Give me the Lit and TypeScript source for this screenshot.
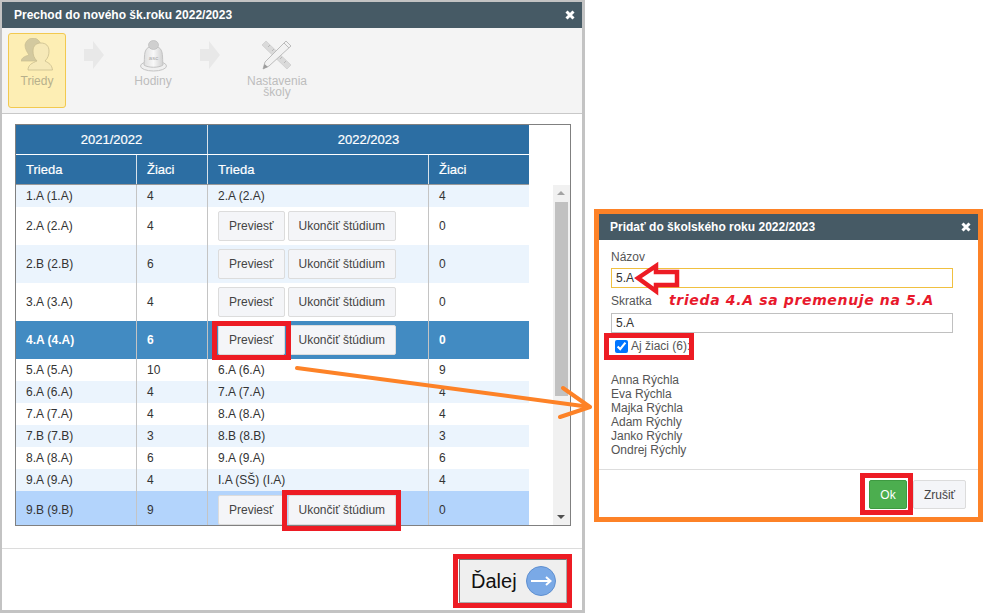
import { LitElement, html, css, svg } from "lit";
import { customElement } from "lit/decorators.js";

type Row = { a: string; n: string; b?: string; m: string; kind?: string };
const rows: Row[] = [
  { a: "1.A (1.A)", n: "4", b: "2.A (2.A)", m: "4", kind: "alt" },
  { a: "2.A (2.A)", n: "4", m: "0" },
  { a: "2.B (2.B)", n: "6", m: "0", kind: "alt" },
  { a: "3.A (3.A)", n: "4", m: "0" },
  { a: "4.A (4.A)", n: "6", m: "0", kind: "sel" },
  { a: "5.A (5.A)", n: "10", b: "6.A (6.A)", m: "9" },
  { a: "6.A (6.A)", n: "4", b: "7.A (7.A)", m: "4", kind: "alt" },
  { a: "7.A (7.A)", n: "4", b: "8.A (8.A)", m: "4" },
  { a: "7.B (7.B)", n: "3", b: "8.B (8.B)", m: "3", kind: "alt" },
  { a: "8.A (8.A)", n: "6", b: "9.A (9.A)", m: "6" },
  { a: "9.A (9.A)", n: "4", b: "I.A (SŠ) (I.A)", m: "4", kind: "alt" },
  { a: "9.B (9.B)", n: "9", m: "0", kind: "hl" },
];
const names = ["Anna Rýchla", "Eva Rýchla", "Majka Rýchla", "Adam Rýchly", "Janko Rýchly", "Ondrej Rýchly"];

const closeIcon = html`<svg class="close" width="10" height="10" viewBox="0 0 10 10"><path d="M1.500 1.500L8.500 8.500M8.500 1.500L1.500 8.500" stroke="#fff" stroke-width="3" fill="none"/></svg>`;
const stepArrow = html`<svg width="20" height="28" viewBox="0 0 20 28"><path d="M0 8H9V0L20 14L9 28V20H0Z" fill="#e8e8e8"/></svg>`;

const people = svg`<svg width="32" height="33" viewBox="0 0 32 33">
  <path d="M0 23C1 19 5 18 8 17C6 14 4 11 4 7C5 2 9 0 12 0C16 0 19 3 20 7L19 23Z" fill="#d3c99f" stroke="#c8bd90" stroke-width=".7"/>
  <path d="M7 32C7 27 11 25 16 23C13 20 12 17 12 13C12 7 16 5 20 5C25 5 28 8 28 13C28 17 27 20 24 23C28 25 31 27 31.500 32Z" fill="#f6e9b8" stroke="#c9bd8e" stroke-width=".8"/>
</svg>`;
const bell = svg`<svg width="27" height="32" viewBox="0 0 27 32">
  <defs><linearGradient id="bg" x1="0" x2="1" y1="0" y2="0"><stop offset="0" stop-color="#dedede"/><stop offset=".5" stop-color="#f8f8f8"/><stop offset="1" stop-color="#d0d0d0"/></linearGradient></defs>
  <ellipse cx="13.500" cy="26" rx="13" ry="5" fill="#f0f0f0" stroke="#c4c4c4"/>
  <path d="M4 25C5 18 3 10 9 7H18C24 10 22 18 23 25C19 28 8 28 4 25Z" fill="url(#bg)" stroke="#c4c4c4"/>
  <ellipse cx="13.500" cy="5" rx="5" ry="4.500" fill="#cfcfcf" stroke="#bdbdbd" stroke-width=".7"/>
  <text x="13.500" y="20" font-size="6" text-anchor="middle" fill="#aaa" font-family="Liberation Sans">asc</text>
</svg>`;
const tools = svg`<svg width="30" height="30" viewBox="0 0 30 30">
  <path d="M4 1L0 5L25 29L29 25Z" fill="#dadada" stroke="#cbcbcb" stroke-width=".7"/>
  <path d="M6 7l2-2M10 11l2-2M14 15l2-2M18 19l2-2M22 23l2-2" stroke="#b9b9b9" fill="none"/>
  <path d="M24 1L29 6L7 26L1 29L3 22Z" fill="#f2f2f2" stroke="#bcbcbc"/>
  <path d="M1 29L2.500 24L6 27Z" fill="#9c9c9c"/>
  <path d="M22 3L27 8" stroke="#bcbcbc"/>
</svg>`;

@customElement("app-root")
export class AppRoot extends LitElement {
  static styles = css`
    :host {
      display: block;
      position: relative;
      width: 998px;
      height: 613px;
      overflow: hidden;
      background: #fff;
      font-family: "Liberation Sans", Arial, sans-serif;
      font-size: 12px;
      color: #333;
    }
    .window {
      position: absolute;
      left: 0;
      top: 0;
      width: 580px;
      height: 608px;
      border: solid #c3c3c3;
      border-width: 2px 3px 3px 2px;
      background: #fff;
      display: flex;
      flex-direction: column;
    }
    .title {
      height: 26px;
      flex: none;
      background: #465a65;
      color: #fff;
      font-weight: bold;
      display: flex;
      align-items: center;
      justify-content: space-between;
      padding: 0 7px 0 12px;
    }
    .dialog .title { padding: 0 7px 0 11px; }
    .close { display: block; }
    .toolbar {
      height: 86px;
      flex: none;
      box-sizing: border-box;
      background: #f4f4f4;
      border-bottom: 1px solid #c8c8c8;
      display: flex;
      align-items: flex-start;
      padding: 5px 0 0 6px;
      color: #bdbdbd;
    }
    .step {
      width: 58px;
      height: 75px;
      box-sizing: border-box;
      display: flex;
      flex-direction: column;
      align-items: center;
      text-align: center;
      line-height: 11px;
      border: 1px solid transparent;
      border-radius: 3px;
    }
    .step.active {
      background: #fdeeb4;
      border-color: #f2c94f;
      color: #b7b08c;
    }
    .icon { height: 41px; padding-top: 6px; display: flex; align-items: flex-start; }
    .step .label { margin-top: -5px; }
    .step.s1 .icon { padding-top: 4px; height: 43px; }
    .step.s2 { margin-left: 3px; }
    .step.s3 { margin-left: 11px; }
    .arrow { width: 55px; display: flex; justify-content: center; padding-top: 8px; }
    .body { flex: 1; padding: 10px 11px 0 13px; min-height: 0; }
    .frame {
      width: 554px;
      height: 400px;
      border: 1px solid #808080;
      position: relative;
      overflow: hidden;
      display: flex;
    }
    .tbl { width: 513px; flex: none; }
    .head1, .head2, .row {
      display: grid;
      grid-template-columns: 121px 71px 221px 100px;
    }
    .head1 { grid-template-columns: 192px 321px; height: 30px; background: #2c6ea3; border-bottom: 1px solid #fff; box-sizing: border-box; }
    .head2 { height: 30px; background: #2c6ea3; border-bottom: 1px solid #999; box-sizing: border-box; }
    .head1 > div, .head2 > div {
      color: #fff;
      font-size: 13px;
      display: flex;
      align-items: center;
      border-right: 1px solid #d8e2ea;
      -webkit-text-stroke: 0.2px #fff;
    }
    .head1 > div { justify-content: center; }
    .head2 > div { padding-left: 10px; }
    .head1 > div:last-child, .head2 > div:last-child { border-right: 0; }
    .row { background: #fff; }
    .row.alt { background: #ebf4fd; }
    .row.sel { background: #428bc2; }
    .row.sel .c { color: #fff; font-weight: bold; }
    .row.sel .c.actions { font-weight: normal; }
    .row.hl { background: #b3d4fc; }
    .c {
      min-height: 22px;
      padding: 0 0 0 10px;
      display: flex;
      align-items: center;
      border-right: 1px solid #c4c4c4;
    }
    .c:last-child { border-right: 0; }
    .c.actions { gap: 3px; padding: 4px 0 4px 10px; }
    .btn {
      height: 30px;
      box-sizing: border-box;
      padding: 0 10px;
      border: 1px solid #dcdcdc;
      border-radius: 2px;
      background: #f4f5f8;
      color: #444;
      font: 12px "Liberation Sans", Arial, sans-serif;
    }
    .sb {
      position: absolute;
      right: 0;
      top: 60px;
      bottom: 0;
      width: 17px;
      background: #f1f1f1;
    }
    .thumb { position: absolute; left: 2px; top: 17px; width: 13px; height: 194px; background: #c1c1c1; }
    .tri { position: absolute; left: 4px; width: 0; height: 0; border-left: 4px solid transparent; border-right: 4px solid transparent; }
    .tri.up { top: 6px; border-bottom: 4px solid #a3a3a3; }
    .tri.down { bottom: 6px; border-top: 4px solid #505050; }
    .footer {
      height: 62px;
      flex: none;
      box-sizing: border-box;
      border-top: 1px solid #dcdcdc;
      display: flex;
      justify-content: flex-end;
      padding: 10px 15px 0 0;
    }
    .next {
      width: 108px;
      height: 44px;
      box-sizing: border-box;
      background: #efefef;
      border: 1px solid #767676;
      border-right-color: #aaa;
      border-bottom-color: #aaa;
      display: flex;
      align-items: center;
      gap: 9px;
      padding: 0 0 0 11px;
      color: #111;
      font: 20px "Liberation Sans", Arial, sans-serif;
    }
    .dialog {
      position: absolute;
      left: 594px;
      top: 209px;
      width: 379px;
      height: 303px;
      border: 5px solid #fd8227;
      background: #fff;
      display: flex;
      flex-direction: column;
    }
    .form { flex: 1; padding: 10px 25px 0 12px; color: #555; min-height: 0; }
    .form label.lbl { display: block; line-height: 14px; height: 14px; }
    .form input.text {
      display: block;
      box-sizing: border-box;
      width: 342px;
      height: 20px;
      margin: 4px 0 6px;
      padding: 0 4px;
      border: 1px solid #c0c0c0;
      font: 12px "Liberation Sans", Arial, sans-serif;
      color: #333;
      background: #fff;
      outline: none;
    }
    .form input.focus { border-color: #f0c040; }
    .form input.second { margin-top: 5px; }
    .check { display: flex; align-items: center; height: 14px; margin: 6px 0 0 4px; gap: 3px; }
    .check input { margin: 0; width: 13px; height: 13px; accent-color: #0075ff; }
    .names { margin-top: 20px; line-height: 14px; }
    .dfoot {
      height: 48px;
      flex: none;
      box-sizing: border-box;
      border-top: 1px solid #ddd;
      display: flex;
      justify-content: flex-end;
      gap: 6px;
      padding: 10px 12px 0 0;
    }
    .ok { width: 38px; height: 29px; background: #4cae4f; border-color: #3e9a41; color: #fff; padding: 0; }
    .cancel { width: 53px; height: 29px; padding: 0; }
    .red {
      position: absolute;
      box-sizing: border-box;
      border: 5px solid #ed1c24;
      pointer-events: none;
    }
    .r1 { left: 212px; top: 321px; width: 79px; height: 39px; }
    .r2 { left: 282px; top: 490px; width: 119px; height: 41px; }
    .r3 { left: 453px; top: 554px; width: 119px; height: 54px; }
    .r4 { left: 604px; top: 333px; width: 90px; height: 27px; }
    .r5 { left: 860px; top: 473px; width: 53px; height: 42px; }
    .marks { position: absolute; left: 0; top: 0; pointer-events: none; }
    .note {
      position: absolute;
      left: 669px;
      top: 292px;
      color: #e8192c;
      font: italic bold 14px "DejaVu Sans", sans-serif;
      letter-spacing: 0.65px;
      white-space: nowrap;
    }
  `;

  private cellRow(r: Row) {
    return html`<div class="row ${r.kind ?? ""}">
      <div class="c">${r.a}</div>
      <div class="c">${r.n}</div>
      ${r.b
        ? html`<div class="c">${r.b}</div>`
        : html`<div class="c actions"><button class="btn">Previesť</button><button class="btn">Ukončiť štúdium</button></div>`}
      <div class="c">${r.m}</div>
    </div>`;
  }

  render() {
    return html`
      <section class="window">
        <div class="title"><span>Prechod do nového šk.roku 2022/2023</span>${closeIcon}</div>
        <div class="toolbar">
          <div class="step active s1"><div class="icon">${people}</div><div class="label">Triedy</div></div>
          <div class="arrow">${stepArrow}</div>
          <div class="step s2"><div class="icon">${bell}</div><div class="label">Hodiny</div></div>
          <div class="arrow">${stepArrow}</div>
          <div class="step s3"><div class="icon">${tools}</div><div class="label">Nastavenia<br />školy</div></div>
        </div>
        <div class="body">
          <div class="frame">
            <div class="tbl">
              <div class="head1"><div>2021/2022</div><div>2022/2023</div></div>
              <div class="head2"><div>Trieda</div><div>Žiaci</div><div>Trieda</div><div>Žiaci</div></div>
              ${rows.map((r) => this.cellRow(r))}
            </div>
            <div class="sb"><div class="tri up"></div><div class="thumb"></div><div class="tri down"></div></div>
          </div>
        </div>
        <div class="footer">
          <button class="next">Ďalej
            <svg width="30" height="30" viewBox="0 0 30 30"><circle cx="15" cy="15" r="14.500" fill="#7aa9e6" stroke="#5e8fd0"/><path d="M5 15H24M20 11L24.500 15L20 19" stroke="#fff" stroke-width="2" fill="none"/></svg>
          </button>
        </div>
      </section>

      <section class="dialog">
        <div class="title"><span>Pridať do školského roku 2022/2023</span>${closeIcon}</div>
        <div class="form">
          <label class="lbl">Názov</label>
          <input class="text focus" .value=${"5.A"} />
          <label class="lbl">Skratka</label>
          <input class="text second" .value=${"5.A"} />
          <div class="check"><input type="checkbox" checked /><span>Aj žiaci (6):</span></div>
          <div class="names">${names.map((n) => html`<div>${n}</div>`)}</div>
        </div>
        <div class="dfoot"><button class="btn ok">Ok</button><button class="btn cancel">Zrušiť</button></div>
      </section>

      <div class="red r1"></div>
      <div class="red r2"></div>
      <div class="red r3"></div>
      <div class="red r4"></div>
      <div class="red r5"></div>
      <svg class="marks" width="998" height="613" viewBox="0 0 998 613">
        <path d="M297 368L590 407M563 388L590 407L560 417" stroke="#fd8227" stroke-width="4" fill="none" stroke-linecap="round" stroke-linejoin="round"/>
        <path d="M638 278L656 266V272H677V285H656V291Z" stroke="#ed1c24" stroke-width="4.500" fill="none"/>
      </svg>
      <div class="note">trieda 4.A sa premenuje na 5.A</div>
    `;
  }
}
